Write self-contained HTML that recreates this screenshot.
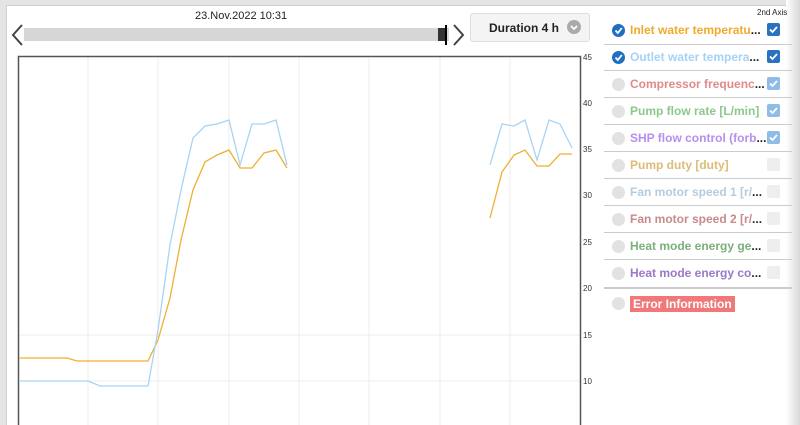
<!DOCTYPE html><html><head><style>
html,body{margin:0;width:800px;height:425px;overflow:hidden}
body{background:#e4e4e4;font-family:"Liberation Sans",sans-serif;position:relative}
.main{position:absolute;left:6px;top:5px;width:782px;height:420px;background:#fff;border:1px solid #d0d0d0;border-bottom:none}
.t{position:absolute;font-size:11px;color:#222}
.row{position:absolute;left:612px;width:180px;height:26px;font-size:12px;font-weight:bold}
.row .c{position:absolute;left:0;top:5px;width:13px;height:13px;border-radius:50%;background:#e2e2e2}
.row .c.on{background:#1e6fc0}
.row .l{position:absolute;left:18px;top:4px;white-space:nowrap}
.row .b{position:absolute;left:155px;top:4px;width:13px;height:13px;border-radius:2px;background:#eee}
.sep{position:absolute;left:604px;width:188px;height:1px;background:#ccc}
svg.ck{position:absolute;left:0;top:0}
</style></head><body>
<div class="main"></div>
<div style="position:absolute;right:0;top:0;width:14px;height:425px;background:linear-gradient(to right,#fff,#d8d8d8)"></div>
<div class="t" style="left:195px;top:10px">23.Nov.2022 10:31</div>
<div style="position:absolute;left:24px;top:28px;width:425px;height:13px;background:#d6d6d6"></div>
<div style="position:absolute;left:438px;top:28px;width:7px;height:13px;background:#333"></div>
<div style="position:absolute;left:445px;top:25px;width:2px;height:20px;background:#000"></div>
<svg style="position:absolute;left:8px;top:22px" width="460" height="26"><path d="M14 3 L5 13 L14 23" fill="none" stroke="#444" stroke-width="2"/><path d="M446 3 L455 13 L446 23" fill="none" stroke="#444" stroke-width="2"/></svg>
<div style="position:absolute;left:470px;top:13px;width:118px;height:27px;background:#f4f4f4;border:1px solid #ddd;border-radius:3px"><span style="position:absolute;left:18px;top:7px;font-size:12px;font-weight:bold;color:#222">Duration 4 h</span><svg style="position:absolute;left:96px;top:6px" width="14" height="14"><circle cx="7" cy="7" r="7" fill="#aaa"/><path d="M4 6 L7 9 L10 6" fill="none" stroke="#fff" stroke-width="1.8"/></svg></div>
<svg style="position:absolute;left:0;top:0" width="600" height="425">
<g stroke="#ececec" stroke-width="1">
<line x1="88" y1="56" x2="88" y2="425"/><line x1="158" y1="56" x2="158" y2="425"/><line x1="229" y1="56" x2="229" y2="425"/><line x1="299" y1="56" x2="299" y2="425"/><line x1="369" y1="56" x2="369" y2="425"/><line x1="440" y1="56" x2="440" y2="425"/><line x1="510" y1="56" x2="510" y2="425"/>
<line x1="19" y1="335" x2="580" y2="335"/><line x1="19" y1="381" x2="580" y2="381"/>
</g>
<rect x="18.5" y="56.5" width="562" height="380" fill="none" stroke="#555" stroke-width="1.5"/>
<g font-size="8" fill="#333"><text x="583" y="60">45</text><text x="583" y="106">40</text><text x="583" y="152">35</text><text x="583" y="198">30</text><text x="583" y="245">25</text><text x="583" y="291">20</text><text x="583" y="338">15</text><text x="583" y="384">10</text></g>
<g fill="none" stroke-width="1.3">
<polyline stroke="#eeb030" points="19,358 67,358 77,361 148,361 158,340 170,298 181,240 193,190 205,162 217,155 229,150 240,168 252,168 264,153 276,150 287,168"/>
<polyline stroke="#eeb030" points="490,218 502,172 514,155 525,150 537,166 549,166 560,154 572,154"/>
<polyline stroke="#a8d4f4" points="19,381 88,381 100,386 148,386 158,330 170,245 181,190 193,138 205,126 217,124 229,120 240,165 252,124 264,124 276,120 287,165"/>
<polyline stroke="#a8d4f4" points="490,165 502,124 514,126 525,120 537,160 549,120 560,124 572,148"/>
</g></svg>
<div class="t" style="left:757px;top:8px;font-size:8px">2nd Axis</div>
<div class="row" style="top:19px"><div class="c on"><svg class="ck" width="13" height="13"><path d="M3.5 6.5 L5.8 9 L9.8 4" fill="none" stroke="#fff" stroke-width="1.8"/></svg></div><div class="l" style="color:#f0aa2a">Inlet water temperatu<span style="color:#222">...</span></div><div class="b" style="background:#2a72c0"><svg class="ck" width="13" height="13"><path d="M3 6.5 L5.5 9 L10 4" fill="none" stroke="#fff" stroke-width="1.8"/></svg></div></div>
<div class="sep" style="top:44px"></div>
<div class="row" style="top:46px"><div class="c on"><svg class="ck" width="13" height="13"><path d="M3.5 6.5 L5.8 9 L9.8 4" fill="none" stroke="#fff" stroke-width="1.8"/></svg></div><div class="l" style="color:#a6d2f6">Outlet water tempera<span style="color:#222">...</span></div><div class="b" style="background:#2a72c0"><svg class="ck" width="13" height="13"><path d="M3 6.5 L5.5 9 L10 4" fill="none" stroke="#fff" stroke-width="1.8"/></svg></div></div>
<div class="sep" style="top:70px"></div>
<div class="row" style="top:73px"><div class="c"></div><div class="l" style="color:#e08a8a">Compressor frequenc<span style="color:#222">...</span></div><div class="b" style="background:#8fbde6"><svg class="ck" width="13" height="13"><path d="M3 6.5 L5.5 9 L10 4" fill="none" stroke="#fff" stroke-width="1.8"/></svg></div></div>
<div class="sep" style="top:97px"></div>
<div class="row" style="top:100px"><div class="c"></div><div class="l" style="color:#8cc88c">Pump flow rate [L/min]</div><div class="b" style="background:#8fbde6"><svg class="ck" width="13" height="13"><path d="M3 6.5 L5.5 9 L10 4" fill="none" stroke="#fff" stroke-width="1.8"/></svg></div></div>
<div class="sep" style="top:124px"></div>
<div class="row" style="top:127px"><div class="c"></div><div class="l" style="color:#b88ef0">SHP flow control (forb<span style="color:#222">...</span></div><div class="b" style="background:#8fbde6"><svg class="ck" width="13" height="13"><path d="M3 6.5 L5.5 9 L10 4" fill="none" stroke="#fff" stroke-width="1.8"/></svg></div></div>
<div class="sep" style="top:151px"></div>
<div class="row" style="top:154px"><div class="c"></div><div class="l" style="color:#dcbc78">Pump duty [duty]</div><div class="b"></div></div>
<div class="sep" style="top:178px"></div>
<div class="row" style="top:181px"><div class="c"></div><div class="l" style="color:#b4cce0">Fan motor speed 1 [r/<span style="color:#222">...</span></div><div class="b"></div></div>
<div class="sep" style="top:205px"></div>
<div class="row" style="top:208px"><div class="c"></div><div class="l" style="color:#c88a8a">Fan motor speed 2 [r/<span style="color:#222">...</span></div><div class="b"></div></div>
<div class="sep" style="top:232px"></div>
<div class="row" style="top:235px"><div class="c"></div><div class="l" style="color:#7ab07a">Heat mode energy ge<span style="color:#222">...</span></div><div class="b"></div></div>
<div class="sep" style="top:259px"></div>
<div class="row" style="top:262px"><div class="c"></div><div class="l" style="color:#9a78c8">Heat mode energy co<span style="color:#222">...</span></div><div class="b"></div></div>
<div class="sep" style="top:287px;height:2px"></div>
<div class="row" style="top:292px"><div class="c"></div><div class="l" style="background:#f07878;color:#fff;padding:1px 3px;left:18px">Error Information</div></div>
</body></html>
